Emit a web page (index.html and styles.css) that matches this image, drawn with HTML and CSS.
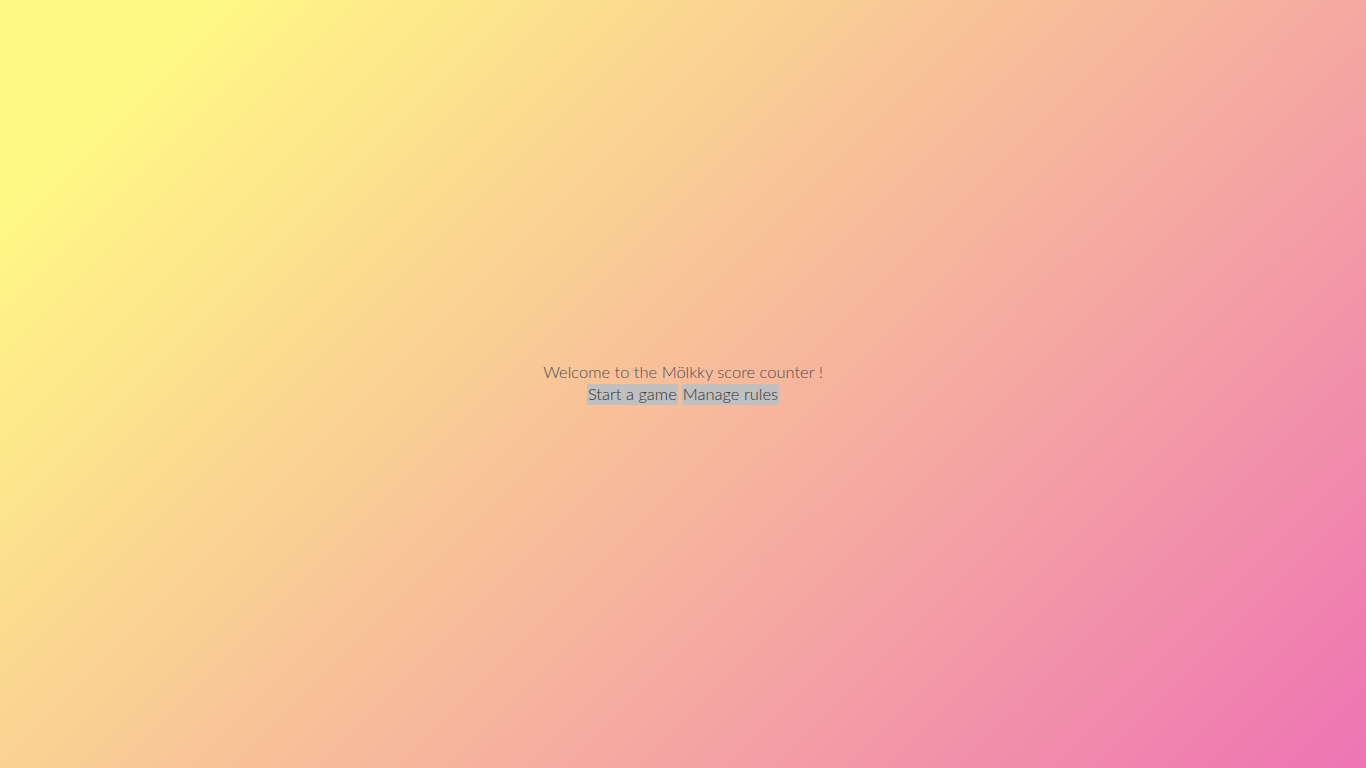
FILE: index.html
```html
<!DOCTYPE html>
<html lang="en">
<head>
<meta charset="utf-8">
<title>Mölkky score counter</title>
<link rel="stylesheet" href="styles.css">
</head>
<body>
<main class="home">
  <div class="welcome">
    <p class="title">Welcome to the Mölkky score counter !</p>
    <div class="actions">
      <button class="btn">Start a game</button>
      <button class="btn">Manage rules</button>
    </div>
  </div>
</main>
</body>
</html>
```
FILE: styles.css
```css
html, body {
  margin: 0;
  height: 100%;
}
body {
  font-family: Lato, "Liberation Sans", sans-serif;
  font-weight: 300;
  font-size: 16.5px;
  color: #4d4d55;
  background: linear-gradient(135deg, #fff885 0%, #fff885 10%, #ee74b4 100%);
}
.home {
  height: 100%;
  display: flex;
  align-items: center;
  justify-content: center;
}
.welcome {
  text-align: center;
  margin-bottom: 2px;
}
.title {
  margin: 0;
  line-height: 21px;
  font-size: 16.5px;
}
.actions {
  display: flex;
  justify-content: center;
  gap: 4px;
  margin-top: 1px;
}
.btn {
  font: inherit;
  font-size: 16.5px;
  color: #333;
  background: #c0c0c0;
  border: none;
  padding: 0 1px;
  line-height: 21px;
  cursor: pointer;
}
```
